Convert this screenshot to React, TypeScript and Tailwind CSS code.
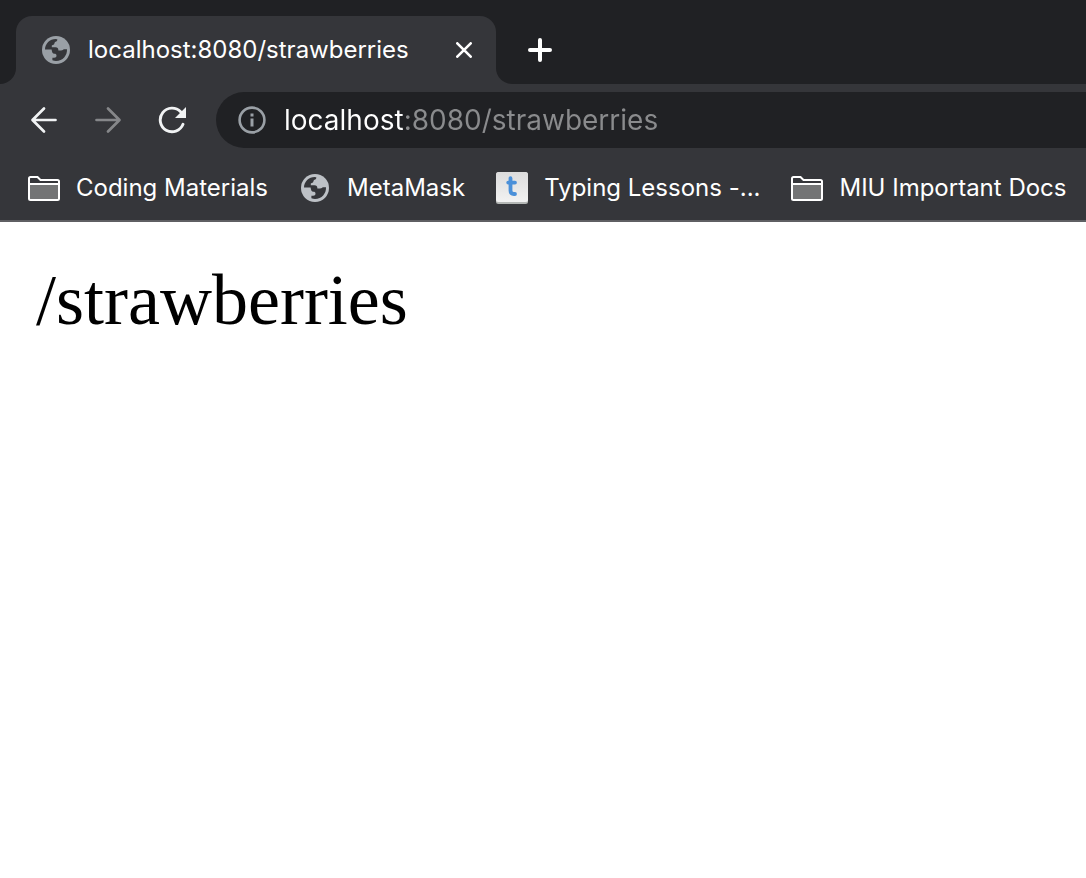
import type { ReactNode } from "react";

function GlobeIcon({ className }: { className: string }) {
  return (
    <svg viewBox="0 0 28 28" className={className} aria-hidden="true">
      <circle cx="14" cy="14" r="14" fill="currentColor" />
      <path
        className="fill-[#35363a]"
        d="M3 13.6C3 7.800 7.800 3 13.800 3C14.600 3 15.100 3.200 15.400 3.500C15.400 4.800 14.600 5.400 13.600 5.800C12.700 6.200 12.600 6.800 12.400 7.600C12.100 8.800 11.200 9.200 9.800 9.400V11.200H13.500C15.500 11.200 16.400 12.400 16.400 14.400H19C20.800 14.400 21.200 13.900 21.600 13.200H25C25.400 19.200 20.800 25 14 25C12.800 25 11.600 24.800 10.400 24.300V21.800H12.200C13.600 21.800 14.500 21 14.500 19.800C14.500 18.400 13.800 17.800 12.400 17.800C10.600 17.800 10 16.400 9.600 13.600Z"
      />
    </svg>
  );
}

function FolderIcon() {
  return (
    <svg viewBox="0 0 32 25" className="h-[25px] w-8" aria-hidden="true">
      <path d="M2 9h28v14H2z" fill="#737475" />
      <path
        d="M1 2.500Q1 1 2.500 1H9.500L12.500 4H29.500Q31 4 31 5.500V22.500Q31 24 29.500 24H2.500Q1 24 1 22.500ZM1 8H31"
        fill="none"
        stroke="#fff"
        strokeWidth="2"
      />
    </svg>
  );
}

function TypingIcon() {
  return (
    <svg viewBox="0 0 32 32" className="size-8" aria-hidden="true">
      <defs>
        <linearGradient id="key" x1="0" y1="0" x2="0" y2="1">
          <stop offset="0" stopColor="#dcdcdc" />
          <stop offset="1" stopColor="#f2f2f2" />
        </linearGradient>
      </defs>
      <rect width="32" height="32" rx="2.500" fill="#b4b7b5" />
      <rect width="32" height="30" rx="2.500" fill="url(#key)" />
      <path
        d="M14.500 6.200V18.500Q14.500 22 18 22H19M12.200 10.600H19"
        fill="none"
        stroke="#4a90d9"
        strokeWidth="3.800"
        strokeLinecap="round"
      />
    </svg>
  );
}

function ArrowIcon({ className }: { className: string }) {
  return (
    <svg viewBox="0 0 28 28" className={className} fill="none" stroke="currentColor" strokeWidth="2.700" strokeLinecap="round" aria-hidden="true">
      <path d="M25.500 14H3M14 2.500L2.500 14L14 25.500" strokeLinejoin="round" />
    </svg>
  );
}

function Bookmark({ icon, children }: { icon: ReactNode; children: ReactNode }) {
  return (
    <a href="#" className="flex shrink-0 items-center gap-4">
      <span className="flex w-8 justify-center">{icon}</span>
      <span className="whitespace-nowrap">{children}</span>
    </a>
  );
}

export default function App() {
  return (
    <div className="min-h-screen overflow-x-hidden bg-white">
      <header className="border-b-2 border-[#5f5f63] bg-[#35363a] font-['Inter',sans-serif] text-white">
        <div className="flex h-[84px]">
          <div className="w-4 rounded-br-2xl bg-[#202124]" />
          <div className="w-[480px] shrink-0 bg-[linear-gradient(#202124_50%,transparent_50%)] pt-4">
            <div className="flex h-full items-center rounded-t-2xl bg-[#35363a] pr-6 pl-[26px]">
              <GlobeIcon className="size-7 text-[#9aa0a6]" />
              <span className="ml-[18px] flex-1 text-2xl">localhost:8080/strawberries</span>
              <button aria-label="Close tab">
                <svg viewBox="0 0 16 16" className="size-4" fill="none" stroke="currentColor" strokeWidth="2.600" strokeLinecap="round">
                  <path d="M1.300 1.300L14.700 14.700M14.700 1.300L1.300 14.700" />
                </svg>
              </button>
            </div>
          </div>
          <div className="flex flex-1 items-center rounded-bl-2xl bg-[#202124] pt-4 pl-8">
            <button aria-label="New tab">
              <svg viewBox="0 0 24 24" className="size-6" fill="none" stroke="currentColor" strokeWidth="4" strokeLinecap="round">
                <path d="M12 2V22M2 12H22" />
              </svg>
            </button>
          </div>
        </div>

        <div className="flex items-center py-2 pl-[30px]">
          <button aria-label="Back">
            <ArrowIcon className="size-7 text-[#f1f3f4]" />
          </button>
          <button aria-label="Forward" className="ml-9">
            <ArrowIcon className="size-7 rotate-180 text-[#86878a]" />
          </button>
          <button aria-label="Reload" className="ml-9">
            <svg viewBox="0 0 28 28" className="size-7 text-[#f1f3f4]" aria-hidden="true">
              <path d="M25 18.300A11.800 11.800 0 1 1 22.600 5.800" fill="none" stroke="currentColor" strokeWidth="2.900" strokeLinecap="round" />
              <path d="M28 1V12H17Z" fill="currentColor" />
            </svg>
          </button>
          <div className="ml-[30px] flex h-14 flex-1 items-center rounded-l-full bg-[#202124] pl-[22px]">
            <svg viewBox="0 0 28 28" className="size-7 shrink-0 text-[#9aa0a6]" aria-hidden="true">
              <circle cx="14" cy="14" r="12.400" fill="none" stroke="currentColor" strokeWidth="2.600" />
              <path d="M12.500 7.500h3v3h-3zM12.500 12.500h3v8h-3z" fill="currentColor" />
            </svg>
            <input
              aria-label="Address"
              defaultValue="localhost:8080/strawberries"
              className="ml-[18px] min-w-0 flex-1 bg-[linear-gradient(90deg,#fff_120px,#8a8b8d_120px)] bg-clip-text text-[28px] leading-9 text-transparent outline-none"
            />
          </div>
        </div>

        <nav aria-label="Bookmarks" className="flex h-16 items-center gap-[31px] pl-7 text-2xl">
          <Bookmark icon={<FolderIcon />}>Coding Materials</Bookmark>
          <Bookmark icon={<GlobeIcon className="size-7 text-[#bdc1c6]" />}>MetaMask</Bookmark>
          <Bookmark icon={<TypingIcon />}>Typing Lessons -...</Bookmark>
          <Bookmark icon={<FolderIcon />}>MIU Important Docs</Bookmark>
        </nav>
      </header>

      <main className="px-9 py-9 font-['Liberation_Serif',serif] text-[72px] leading-[84px] text-black">
        /strawberries
      </main>
    </div>
  );
}
